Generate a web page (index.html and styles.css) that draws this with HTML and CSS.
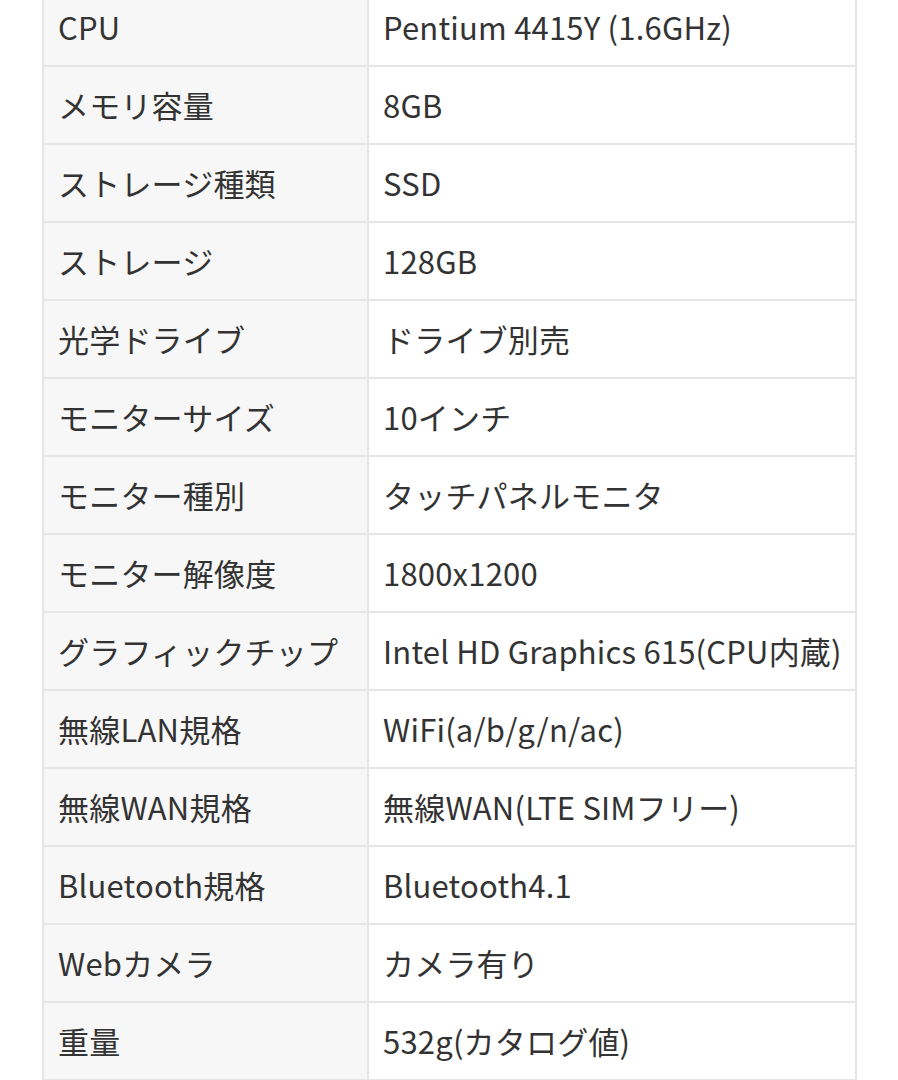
FILE: index.html
```html
<!DOCTYPE html>
<html lang="ja">
<head>
<meta charset="utf-8">
<link rel="stylesheet" href="styles.css">
</head>
<body>
<table class="specs">
  <colgroup><col class="col-label"><col class="col-value"></colgroup>
  <tbody>
    <tr><th>CPU</th><td>Pentium 4415Y (1.6GHz)</td></tr>
    <tr><th>メモリ容量</th><td>8GB</td></tr>
    <tr><th>ストレージ種類</th><td>SSD</td></tr>
    <tr><th>ストレージ</th><td>128GB</td></tr>
    <tr><th>光学ドライブ</th><td>ドライブ別売</td></tr>
    <tr><th>モニターサイズ</th><td>10インチ</td></tr>
    <tr><th>モニター種別</th><td>タッチパネルモニタ</td></tr>
    <tr><th>モニター解像度</th><td>1800x1200</td></tr>
    <tr><th>グラフィックチップ</th><td>Intel HD Graphics 615(CPU内蔵)</td></tr>
    <tr><th>無線LAN規格</th><td>WiFi(a/b/g/n/ac)</td></tr>
    <tr><th>無線WAN規格</th><td>無線WAN(LTE SIMフリー)</td></tr>
    <tr><th>Bluetooth規格</th><td>Bluetooth4.1</td></tr>
    <tr><th>Webカメラ</th><td>カメラ有り</td></tr>
    <tr><th>重量</th><td>532g(カタログ値)</td></tr>
  </tbody>
</table>
</body>
</html>
```
FILE: styles.css
```css
html, body {
  margin: 0;
  padding: 0;
  background: #ffffff;
}
body {
  font-family: "Noto Sans CJK JP", "Noto Sans", sans-serif;
  color: #333333;
}
.specs {
  margin: -13px 0 0 42px;
  width: 815px;
  border-collapse: collapse;
  table-layout: fixed;
}
.col-label { width: 325px; }
.specs th,
.specs td {
  border: 2px solid #e6e6e6;
  height: 78px;
  padding: 0 14px;
  box-sizing: border-box;
  font-size: 31px;
  letter-spacing: 0.2px;
  font-weight: 400;
  text-align: left;
  vertical-align: middle;
  white-space: nowrap;
  line-height: 1.2;
}
.specs th {
  background: #f7f7f7;
}
.specs td {
  background: #ffffff;
}
```
